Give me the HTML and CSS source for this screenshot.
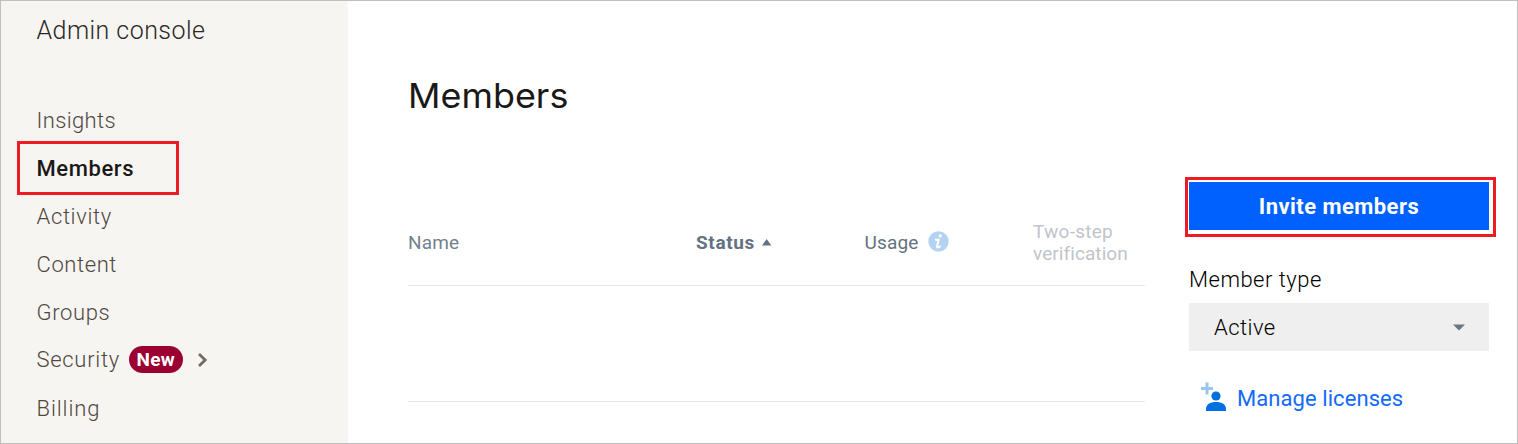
FILE: index.html
```html
<!DOCTYPE html>
<html lang="en">
<head>
<meta charset="utf-8">
<title>Members</title>
<link rel="stylesheet" href="styles.css">
</head>
<body>
<div class="page">
  <aside class="sidebar">
    <div class="console-title">Admin console</div>
    <nav class="nav">
      <a class="nav-item insights">Insights</a>
      <a class="nav-item current"><span>Members</span></a>
      <a class="nav-item activity">Activity</a>
      <a class="nav-item content">Content</a>
      <a class="nav-item groups">Groups</a>
      <a class="nav-item security"><span>Security</span><span class="badge">New</span>
        <svg class="chevron" width="12" height="16" viewBox="0 0 12 16"><path d="M2 2l6.200 6L2 14" fill="none" stroke="#736c64" stroke-width="2.800"/></svg>
      </a>
      <a class="nav-item billing">Billing</a>
    </nav>
  </aside>
  <main class="main">
    <section class="members">
      <h1 class="title">Members</h1>
      <div class="table-head">
        <div class="col-name">Name</div>
        <div class="col-status">Status
          <svg width="10" height="7" viewBox="0 0 10 7"><path d="M0 6.500L4.700 0l4.600 6.500z" fill="#637282"/></svg>
        </div>
        <div class="col-usage"><span>Usage</span>
          <svg width="21" height="21" viewBox="0 0 21 21"><circle cx="10.5" cy="10.5" r="10.2" fill="#b4d3f2"/><circle cx="12.3" cy="4.800" r="1.600" fill="#fff"/><path d="M7 8.700h3.600L9 15.500q-.2 1.300 1.200 .9l2.600-1.200" fill="none" stroke="#fff" stroke-width="2"/></svg>
        </div>
        <div class="col-two-step"><span class="two">Two-step</span><br><span class="verify">verification</span></div>
      </div>
      <div class="table-row"></div>
    </section>
    <aside class="actions">
      <div class="invite-frame"><button class="invite"><span>Invite members</span></button></div>
      <div class="type-label">Member type</div>
      <div class="select"><span>Active</span>
        <svg width="12" height="7" viewBox="0 0 12 7"><path d="M0 .5h12L6 6.500z" fill="#6c7680"/></svg>
      </div>
      <a class="licenses">
        <svg width="26" height="30" viewBox="0 0 26 30"><path d="M0 6.500h12M6 .5v12" stroke="#99c5f0" stroke-width="3"/><circle cx="15" cy="14" r="4.600" fill="#0070e0"/><path d="M5 29v-1.800C5 22.500 9 20 15 20s10 2.500 10 7.200V29z" fill="#0070e0"/></svg>
        <span>Manage licenses</span>
      </a>
    </aside>
  </main>
</div>
</body>
</html>
```
FILE: styles.css
```css
* { box-sizing: border-box; }
body { margin: 0; font-family: Roboto, "Liberation Sans", sans-serif; color: #1b1918; }
.page { width: 1518px; height: 444px; border: 1px solid #c0bebe; display: flex; background: #fff; overflow: hidden; }
.sidebar { width: 347px; background: #f7f5f2; flex: none; }
.console-title { height: 95px; padding: 14px 0 0 35.5px; font-size: 25px; line-height: 32px; font-weight: 300; letter-spacing: .45px; color: #2b2724; }
.nav-item { height: 48px; padding-left: 35.5px; display: flex; align-items: center; font-size: 22px; font-weight: 300; letter-spacing: .5px; color: #4f4840; }
.insights { letter-spacing: .35px; }
.activity, .groups { letter-spacing: .65px; }
.content { letter-spacing: .6px; }
.current { width: 162px; height: 54px; margin: -3px 0 -3px 16px; padding-left: 16.5px; border: 3px solid #ed1c24; font-weight: 500; letter-spacing: .6px; color: #1b1918; }
.security { padding-bottom: 2px; letter-spacing: .7px; }
.billing { letter-spacing: .9px; }
.badge { width: 54px; height: 27px; margin-left: 9px; border-radius: 14px; background: #9b0032; color: #fff; font-size: 19px; line-height: 28px; font-weight: 700; text-align: center; letter-spacing: .3px; }
.chevron { margin-left: 14px; margin-top: 2px; }
.main { flex: 1; display: flex; }
.members { width: 737px; margin-left: 60px; }
.title { height: 181px; margin: 0; padding-top: 73px; font: 400 34px/44px Inter, sans-serif; transform: scaleX(1.057); transform-origin: left; }
.table-head { height: 104px; display: grid; grid-template-columns: 288px 168.500px 168.500px 112px; align-items: center; border-bottom: 1px solid #e6e8eb; font-size: 19px; color: #74818e; padding-top: 17px; }
.col-name { letter-spacing: .15px; }
.col-status { font-weight: 700; color: #637282; letter-spacing: .65px; }
.col-status svg { margin-left: 2px; vertical-align: 3px; }
.col-usage { display: flex; gap: 10px; align-items: center; color: #64717e; letter-spacing: .15px; }
.col-usage svg { margin-top: -2px; }
.col-two-step { line-height: 22px; color: #bfc4cb; padding-top: 2px; letter-spacing: .08px; }
.two { letter-spacing: .25px; }
.table-row { height: 116px; border-bottom: 1px solid #e6e8eb; }
.actions { width: 312px; margin-left: 40px; padding-top: 176px; }
.invite-frame { width: 311px; height: 60px; padding: 2px 4px 4px 1px; border: 3px solid #ed1c24; }
.invite { display: block; width: 300px; height: 48px; padding: 1px 0 0; border: 0; background: #0061fe; color: #fff; font: 700 22px/48px Roboto, sans-serif; letter-spacing: .45px; }
.type-label { height: 66px; padding: 27px 0 0 4px; font-size: 22px; line-height: 32px; font-weight: 300; letter-spacing: .5px; color: #000; }
.select { width: 300px; height: 48px; margin-left: 4px; padding: 0 24px 0 25px; background: #efefef; display: flex; align-items: center; justify-content: space-between; font-size: 22px; font-weight: 300; letter-spacing: .45px; color: #000; }
.licenses { display: flex; align-items: center; gap: 10px; height: 36px; margin: 28px 0 0 16px; color: #1468fa; font-size: 22px; letter-spacing: .07px; }
.licenses span { padding-top: 3px; }
```
